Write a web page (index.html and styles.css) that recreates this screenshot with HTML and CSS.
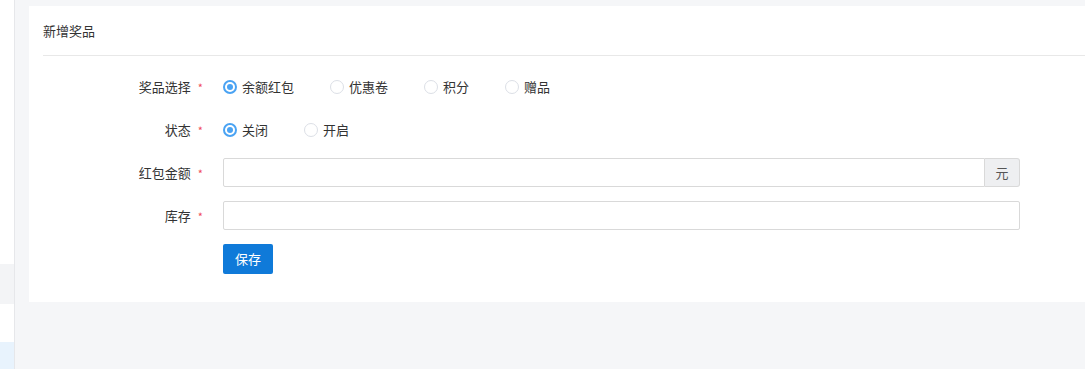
FILE: index.html
```html
<!DOCTYPE html>
<html lang="zh">
<head>
<meta charset="utf-8">
<link rel="stylesheet" href="styles.css">
</head>
<body>
<div class="app">
  <aside class="sidebar">
    <div class="side-fill"></div>
    <div class="side-item gray"></div>
    <div class="side-gap"></div>
    <div class="side-item blue"></div>
  </aside>
  <main class="main">
    <section class="card">
      <div class="card-header">新增奖品</div>
      <div class="card-body">
        <div class="row">
          <div class="label">奖品选择<span class="req">*</span></div>
          <div class="control radios">
            <label class="radio"><span class="dot on"></span>余额红包</label>
            <label class="radio"><span class="dot"></span>优惠卷</label>
            <label class="radio"><span class="dot"></span>积分</label>
            <label class="radio"><span class="dot"></span>赠品</label>
          </div>
        </div>
        <div class="row">
          <div class="label">状态<span class="req">*</span></div>
          <div class="control radios">
            <label class="radio"><span class="dot on"></span>关闭</label>
            <label class="radio"><span class="dot"></span>开启</label>
          </div>
        </div>
        <div class="row">
          <div class="label">红包金额<span class="req">*</span></div>
          <div class="control input-group">
            <div class="input grow"></div>
            <div class="addon">元</div>
          </div>
        </div>
        <div class="row">
          <div class="label">库存<span class="req">*</span></div>
          <div class="control">
            <div class="input"></div>
          </div>
        </div>
        <div class="row">
          <div class="label"></div>
          <div class="control">
            <button class="btn">保存</button>
          </div>
        </div>
      </div>
    </section>
  </main>
</div>
</body>
</html>
```

FILE: styles.css
```css
* { box-sizing: border-box; }
html, body { margin: 0; padding: 0; }
body {
  font-family: "Noto Sans CJK SC", "Liberation Sans", sans-serif;
  font-size: 13px;
  color: #333;
  background: #f5f6f8;
  width: 1085px;
  height: 369px;
  overflow: hidden;
}
.app { display: flex; height: 369px; }
.sidebar {
  width: 15px;
  flex: none;
  background: #fff;
  border-right: 1px solid #e6e7ea;
  display: flex;
  flex-direction: column;
}
.side-fill { height: 264px; }
.side-item { height: 40px; }
.side-item.gray { background: #f3f4f6; }
.side-gap { height: 38px; }
.side-item.blue { background: #e8f3fd; flex: 1; }
.main {
  flex: 1;
  padding: 6px 0 0 14px;
  min-width: 0;
}
.card {
  background: #fff;
  width: 1070px;
  height: 296px;
  padding: 0 0 0 14px;
}
.card-header {
  height: 50px;
  line-height: 49px;
  border-bottom: 1px solid #e8e8e8;
  font-size: 13px;
  color: #333;
}
.card-body { padding-top: 16px; }
.row {
  display: flex;
  align-items: center;
  height: 29px;
  margin-bottom: 14px;
}
.label {
  width: 180px;
  flex: none;
  text-align: right;
  padding-right: 20px;
  color: #333;
}
.req { color: #f04a5a; margin-left: 7px; font-size: 11px; }
.control { display: flex; align-items: center; }
.radio {
  display: flex;
  align-items: center;
  margin-right: 36px;
  color: #333;
}
.dot {
  width: 14px;
  height: 14px;
  border: 1px solid #dcdfe6;
  border-radius: 50%;
  margin-right: 5px;
  position: relative;
  background: #fff;
}
.dot.on { border: 2px solid #4aa3f3; }
.dot.on::after {
  content: "";
  position: absolute;
  left: 2px; top: 2px;
  width: 6px; height: 6px;
  border-radius: 50%;
  background: #4aa3f3;
}
.input-group { width: 797px; }
.input {
  width: 797px;
  height: 29px;
  border: 1px solid #d9d9d9;
  border-radius: 2px;
  background: #fff;
}
.input.grow {
  flex: 1;
  width: auto;
  border-radius: 2px 0 0 2px;
}
.addon {
  width: 35px;
  height: 29px;
  border: 1px solid #d9d9d9;
  border-left: none;
  border-radius: 0 3px 3px 0;
  background: #eeeff1;
  display: flex;
  align-items: center;
  justify-content: center;
  color: #555;
}
.btn {
  font-family: inherit;
  font-size: 13px;
  color: #fff;
  background: #0f7ad9;
  border: none;
  border-radius: 2px;
  width: 50px;
  height: 30px;
  padding: 0;
}
```
